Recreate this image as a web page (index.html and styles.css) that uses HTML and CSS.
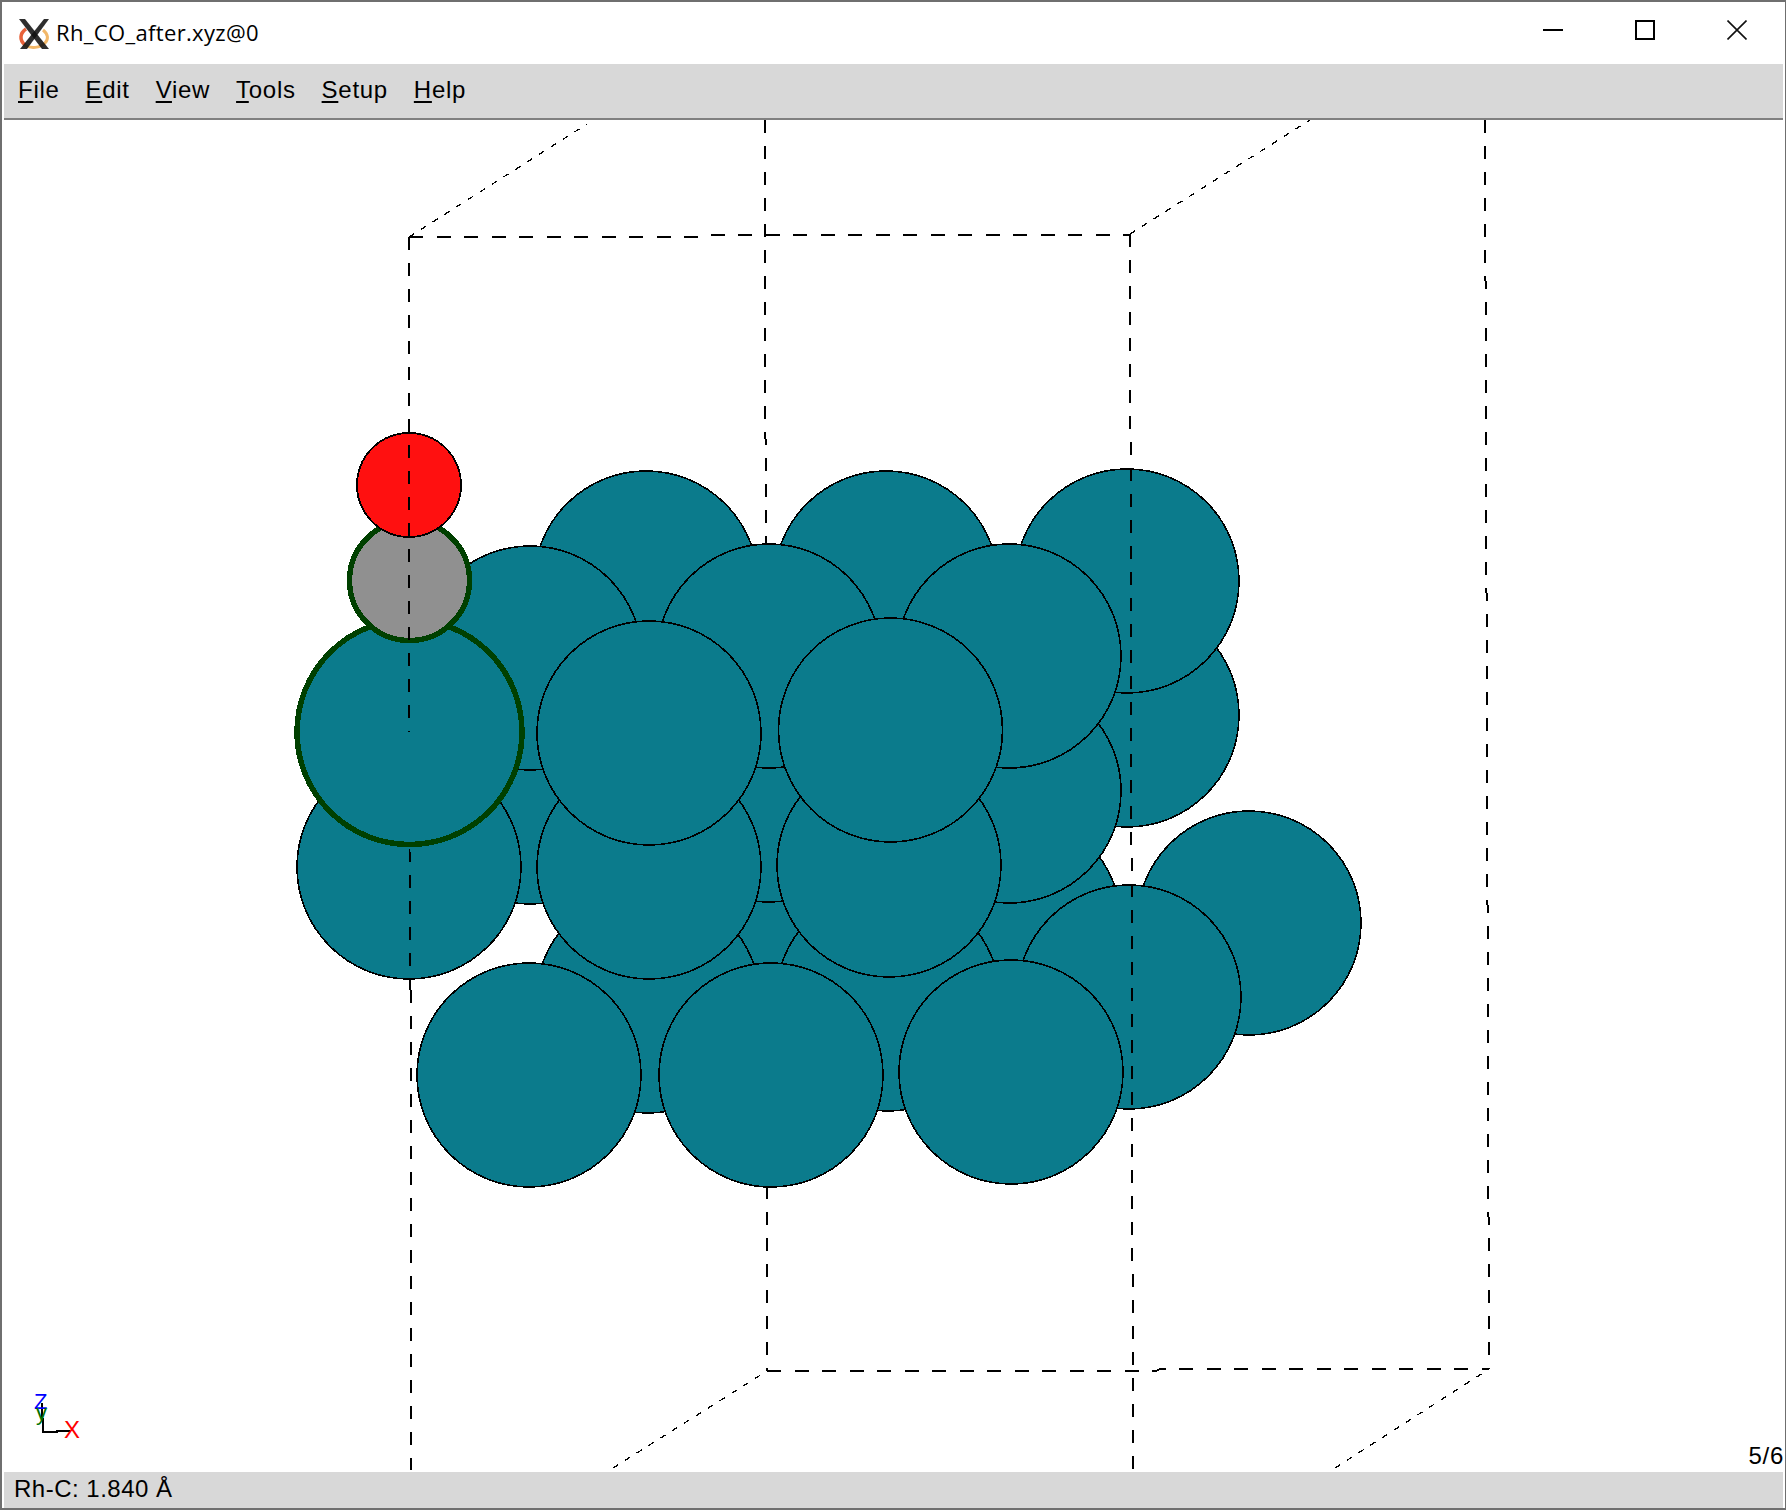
FILE: index.html
```html
<!DOCTYPE html>
<html lang="en">
<head>
<meta charset="utf-8">
<title>Rh_CO_after.xyz@0</title>
<link rel="stylesheet" href="styles.css">
</head>
<body>
<div class="window">
  <header class="titlebar">
    <svg class="app-icon" width="32" height="32" viewBox="0 0 32 32" aria-hidden="true">
      <path class="logo-red" d="M8 11C2 15 1 22 7 27"/>
      <path class="logo-orange" d="M6 27C13 31 22 30 27 25C31 21 30 16 25 12"/>
      <path class="logo-x" d="M1 1L7 1L31 31L24 31Z"/>
      <path class="logo-x" d="M26 1L31 1L9 31L2 31Z"/>
    </svg>
    <span class="title">Rh_CO_after.xyz@0</span>
    <div class="win-controls">
      <svg width="20" height="20" viewBox="0 0 20 20" aria-hidden="true"><path class="ctl" d="M0 10H20"/></svg>
      <svg width="20" height="20" viewBox="0 0 20 20" aria-hidden="true"><rect class="ctl" x="1" y="1" width="18" height="18"/></svg>
      <svg width="20" height="20" viewBox="0 0 20 20" aria-hidden="true"><path class="ctl ctl-x" d="M0.5 0.5L19.5 19.5M19.5 0.5L0.5 19.5"/></svg>
    </div>
  </header>
  <nav class="menubar">
    <span class="menu-item"><u>F</u>ile</span>
    <span class="menu-item"><u>E</u>dit</span>
    <span class="menu-item"><u>V</u>iew</span>
    <span class="menu-item"><u>T</u>ools</span>
    <span class="menu-item"><u>S</u>etup</span>
    <span class="menu-item"><u>H</u>elp</span>
  </nav>
  <main class="canvas">
    <svg class="scene" width="1780" height="1352" viewBox="4 120 1780 1352" role="img" aria-label="Rh slab with CO molecule">
      <g class="box-back">
        <path class="dash-v" d="M765 120L767 1371"/>
        <path class="dash-v" d="M1485 120L1489 1369"/>
        <path class="dash-h" d="M767 1371H1156L1160 1369H1489"/>
        <path class="dash-d" d="M613 1468L767 1371"/>
        <path class="dash-d" d="M1335 1468L1489 1369"/>
        <path class="dash-d" d="M409 237L587 124"/>
        <path class="dash-d" d="M1130 234L1310 120"/>
        <path class="dash-v" d="M411 860L411 1470"/>
      </g>
      <g class="atoms">
        <circle cx="769" cy="923" r="112"/><circle cx="1009" cy="923" r="112"/><circle cx="1249" cy="923" r="112"/>
        <circle cx="648" cy="1001" r="112"/><circle cx="888" cy="999" r="112"/><circle cx="1129" cy="997" r="112"/>
        <circle cx="529" cy="1075" r="112"/><circle cx="771" cy="1075" r="112"/><circle cx="1011" cy="1072" r="112"/>
        <circle cx="646" cy="716" r="112"/><circle cx="886" cy="716" r="112"/><circle cx="1127" cy="715" r="112"/>
        <circle cx="530" cy="792" r="112"/><circle cx="769" cy="790" r="112"/><circle cx="1009" cy="791" r="112"/>
        <circle cx="409" cy="867" r="112"/><circle cx="649" cy="867" r="112"/><circle cx="889" cy="865" r="112"/>
      </g>
      <path class="dash-v" d="M409.5 849L410.5 990"/>
      <g class="atoms">
        <circle cx="646" cy="583" r="112"/><circle cx="886" cy="583" r="112"/><circle cx="1127" cy="581" r="112"/>
        <circle cx="530" cy="658" r="112"/><circle cx="769" cy="656" r="112"/><circle cx="1009" cy="656" r="112"/>
        <circle cx="649" cy="733" r="112"/><circle cx="890.5" cy="730" r="112"/>
      </g>
      <circle class="selected teal" cx="409.5" cy="732" r="112.5"/>
      <circle class="selected grey" cx="409.5" cy="580.5" r="60"/>
      <circle class="oxygen" cx="409" cy="485" r="52"/>
      <path class="dash-v" d="M409 237V732"/>
      <path class="dash-v" d="M1130 234L1133 1470"/>
      <path class="dash-h" d="M409 237H700L702 235H1130"/>
      <g class="axes">
        <path class="axis" d="M42 1403L43 1432H57V1431H70"/>
        <text class="axis-label axis-z" x="34" y="1409">Z</text>
        <text class="axis-label axis-y" x="36" y="1420">y</text>
        <text class="axis-label axis-x" x="64" y="1438">X</text>
      </g>
    </svg>
    <span class="frame-count">5/6</span>
  </main>
  <footer class="statusbar">Rh-C: 1.840 Å</footer>
</div>
</body>
</html>
```

FILE: styles.css
```css
html, body {
  margin: 0;
  padding: 0;
  background: #ffffff;
}

.window {
  box-sizing: border-box;
  width: 1786px;
  height: 1510px;
  display: flex;
  flex-direction: column;
  border-top: 2px solid #6f6f6f;
  border-left: 2px solid #6f6f6f;
  border-right: 1px solid #6f6f6f;
  border-bottom: 2px solid #6f6f6f;
  font-family: "Liberation Sans", Arial, sans-serif;
  color: #000000;
  overflow: hidden;
}

.titlebar {
  flex: 0 0 62px;
  display: flex;
  align-items: center;
  background: #ffffff;
  padding-left: 16px;
}

.app-icon {
  flex: none;
  margin-top: 2px;
}

.logo-x {
  fill: #111111;
  opacity: 0.88;
}

.logo-red {
  fill: none;
  stroke: #e8623a;
  stroke-width: 3.5;
}

.logo-orange {
  fill: none;
  stroke: #f2b768;
  stroke-width: 3;
}

.title {
  margin-left: 6px;
  margin-bottom: 2px;
  font-family: "Open Sans", "Noto Sans", sans-serif;
  font-size: 22px;
  line-height: 28px;
  letter-spacing: 0.35px;
}

.win-controls {
  margin-left: auto;
  display: flex;
  gap: 72px;
  padding-right: 38px;
  margin-top: -6px;
}

.ctl {
  fill: none;
  stroke: #000000;
  stroke-width: 2;
}

.ctl-x {
  stroke: #111111;
  stroke-width: 1.6;
}

.menubar {
  flex: 0 0 56px;
  box-sizing: border-box;
  display: flex;
  align-items: center;
  gap: 26px;
  margin: 0 2px 0 2px;
  padding: 0 0 2px 14px;
  background: #d8d8d8;
  border-bottom: 2px solid #808080;
  font-size: 24px;
  letter-spacing: 0.7px;
}

.menu-item u {
  text-decoration-thickness: 2px;
  text-underline-offset: 3px;
}

.canvas {
  position: relative;
  flex: 1 1 auto;
  min-height: 0;
  margin-left: 2px;
  background: #ffffff;
  overflow: hidden;
}

.scene {
  display: block;
}

.atoms circle,
.teal {
  fill: #0b7b8c;
}

.atoms circle {
  stroke: #000000;
  stroke-width: 1.6;
  shape-rendering: crispEdges;
}

.selected {
  stroke: #004000;
  stroke-width: 5.5;
  shape-rendering: crispEdges;
}

.grey {
  fill: #909090;
}

.oxygen {
  fill: #ff1010;
  stroke: #000000;
  stroke-width: 1.8;
  shape-rendering: crispEdges;
}

.dash-v,
.dash-h,
.dash-d {
  fill: none;
  stroke: #000000;
}

.dash-v {
  stroke-width: 2;
  stroke-dasharray: 13 13;
  shape-rendering: crispEdges;
}

.dash-h {
  stroke-width: 2;
  stroke-dasharray: 14 13.5;
  shape-rendering: crispEdges;
}

.dash-d {
  stroke-width: 1.3;
  stroke-dasharray: 6 8;
  shape-rendering: crispEdges;
}

.axis {
  fill: none;
  stroke: #000000;
  stroke-width: 2;
  shape-rendering: crispEdges;
}

.axis-label {
  font-family: "Liberation Sans", Arial, sans-serif;
  font-size: 22px;
}

.axis-z {
  fill: #0000ff;
}

.axis-y {
  fill: #007000;
}

.axis-x {
  fill: #ff0000;
  font-size: 24px;
}

.frame-count {
  position: absolute;
  right: 1px;
  bottom: 2px;
  font-size: 24px;
  line-height: 28px;
  letter-spacing: 0.7px;
}

.statusbar {
  flex: 0 0 36px;
  box-sizing: border-box;
  margin: 0 2px 0 2px;
  padding: 1px 0 0 10px;
  background: #d8d8d8;
  font-size: 24px;
  line-height: 32px;
  letter-spacing: 0.5px;
}
```
